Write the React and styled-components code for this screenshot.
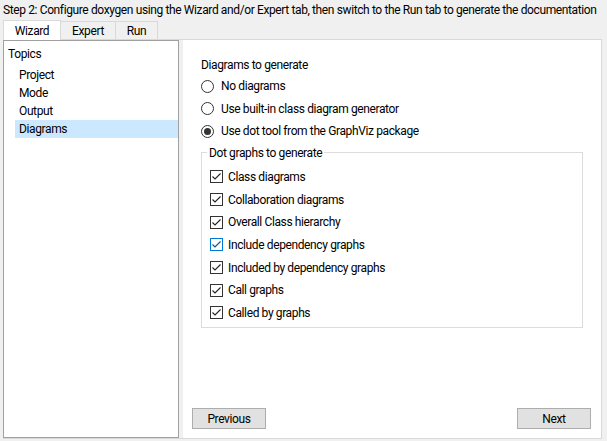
import React from 'react';
import styled, { createGlobalStyle } from 'styled-components';

const GlobalStyle = createGlobalStyle`
  html, body {
    margin: 0;
    padding: 0;
    background: #f0f0f0;
  }
  body {
    width: 607px;
    height: 441px;
    overflow: hidden;
    font-family: Roboto, "Noto Sans", sans-serif;
    font-size: 12px;
    letter-spacing: -0.38px;
    color: #000;
  }
`;

const Window = styled.div`
  display: flex;
  flex-direction: column;
  width: 607px;
  height: 441px;
`;

const StepTitle = styled.div`
  height: 20px;
  line-height: 20px;
  padding-left: 3px;
  white-space: nowrap;
`;

const TabBar = styled.div`
  display: flex;
  margin-left: 3px;
  height: 20px;
  position: relative;
  z-index: 1;
`;

const Tab = styled.div`
  box-sizing: border-box;
  width: ${(p) => p.$width}px;
  height: ${(p) => (p.$active ? 20 : 19)}px;
  margin-top: ${(p) => (p.$active ? 0 : 1)}px;
  border: 1px solid #d9d9d9;
  border-bottom: ${(p) => (p.$active ? 'none' : '1px solid #d9d9d9')};
  margin-left: ${(p) => (p.$first ? 0 : -1)}px;
  background: ${(p) => (p.$active ? '#fff' : '#f0f0f0')};
  display: flex;
  align-items: center;
  justify-content: center;
  padding-top: 1px;
`;

const Pane = styled.div`
  box-sizing: border-box;
  margin-top: -1px;
  margin-left: 3px;
  width: 599px;
  height: 400px;
  border: 1px solid #d9d9d9;
  border-left: none;
  background: #f0f0f0;
  display: flex;
`;

const TopicList = styled.div`
  box-sizing: border-box;
  width: 176px;
  height: 100%;
  background: #fff;
  border: 1px solid #a0a0a0;
  padding-top: 4px;
`;

const TopicHeader = styled.div`
  height: 18px;
  line-height: 18px;
  padding-left: 4px;
  margin-bottom: 3px;
`;

const TopicItem = styled.div`
  height: 18px;
  line-height: 18px;
  margin-left: 11px;
  padding-left: 4px;
  background: ${(p) => (p.$selected ? '#cce8ff' : 'transparent')};
`;

const Splitter = styled.div`
  width: 4px;
`;

const Page = styled.div`
  flex: 1;
  background: #fff;
  display: flex;
  flex-direction: column;
  padding: 16px 9px 9px 9px;
`;

const Section = styled.div`
  padding-left: 9px;
  width: 382px;
`;

const Label = styled.div`
  height: 18px;
  line-height: 18px;
  margin-bottom: 1px;
`;

const RadioRow = styled.div`
  display: flex;
  align-items: center;
  height: 22.5px;
  gap: 7px;
`;

const RadioCircle = styled.span`
  box-sizing: border-box;
  width: 13px;
  height: 13px;
  border-radius: 50%;
  border: 1px solid #333;
  display: flex;
  align-items: center;
  justify-content: center;
  &::after {
    content: '';
    display: ${(p) => (p.$checked ? 'block' : 'none')};
    width: 7px;
    height: 7px;
    border-radius: 50%;
    background: #333;
  }
`;

const GroupBox = styled.fieldset`
  box-sizing: border-box;
  margin: 2px 0 0 0;
  padding: 5px 0 3px 8px;
  border: 1px solid #dcdcdc;
  min-width: 0;
`;

const Legend = styled.legend`
  padding: 0 2px;
  margin-left: -3px;
  line-height: 16px;
`;

const CheckRow = styled.div`
  display: flex;
  align-items: center;
  height: 22.7px;
  gap: 5px;
`;

const CheckBox = styled.span`
  box-sizing: border-box;
  width: 13px;
  height: 13px;
  border: 1px solid ${(p) => (p.$focus ? '#0078d7' : '#333')};
  display: flex;
  align-items: center;
  justify-content: center;
  background: #fff;
`;

const Spacer = styled.div`
  flex: 1;
`;

const ButtonRow = styled.div`
  display: flex;
  justify-content: space-between;
  padding: 0 1px 0 0;
`;

const Button = styled.div`
  box-sizing: border-box;
  width: 74px;
  height: 21px;
  background: #e1e1e1;
  border: 1px solid #adadad;
  display: flex;
  align-items: center;
  justify-content: center;
`;

const Check = ({ focus }) => (
  <CheckBox $focus={focus}>
    <svg width="11" height="11" viewBox="0 0 11 11">
      <path d="M1.5 5.5 L4 8 L9.5 2.5" fill="none" stroke={focus ? '#0f4f8a' : '#222'} strokeWidth="1.1" />
    </svg>
  </CheckBox>
);

const graphs = [
  'Class diagrams',
  'Collaboration diagrams',
  'Overall Class hierarchy',
  'Include dependency graphs',
  'Included by dependency graphs',
  'Call graphs',
  'Called by graphs',
];

export default function App() {
  return (
    <Window>
      <GlobalStyle />
      <StepTitle>
        Step 2: Configure doxygen using the Wizard and/or Expert tab, then switch to the Run tab to generate the documentation
      </StepTitle>
      <TabBar>
        <Tab $width={58} $active $first>Wizard</Tab>
        <Tab $width={56}>Expert</Tab>
        <Tab $width={43}>Run</Tab>
      </TabBar>
      <Pane>
        <TopicList>
          <TopicHeader>Topics</TopicHeader>
          <TopicItem>Project</TopicItem>
          <TopicItem>Mode</TopicItem>
          <TopicItem>Output</TopicItem>
          <TopicItem $selected>Diagrams</TopicItem>
        </TopicList>
        <Splitter />
        <Page>
          <Section>
            <Label>Diagrams to generate</Label>
            <RadioRow><RadioCircle />No diagrams</RadioRow>
            <RadioRow><RadioCircle />Use built-in class diagram generator</RadioRow>
            <RadioRow><RadioCircle $checked />Use dot tool from the GraphViz package</RadioRow>
            <GroupBox>
              <Legend>Dot graphs to generate</Legend>
              {graphs.map((g, i) => (
                <CheckRow key={g}>
                  <Check focus={i === 3} />
                  {g}
                </CheckRow>
              ))}
            </GroupBox>
          </Section>
          <Spacer />
          <ButtonRow>
            <Button>Previous</Button>
            <Button>Next</Button>
          </ButtonRow>
        </Page>
      </Pane>
    </Window>
  );
}
